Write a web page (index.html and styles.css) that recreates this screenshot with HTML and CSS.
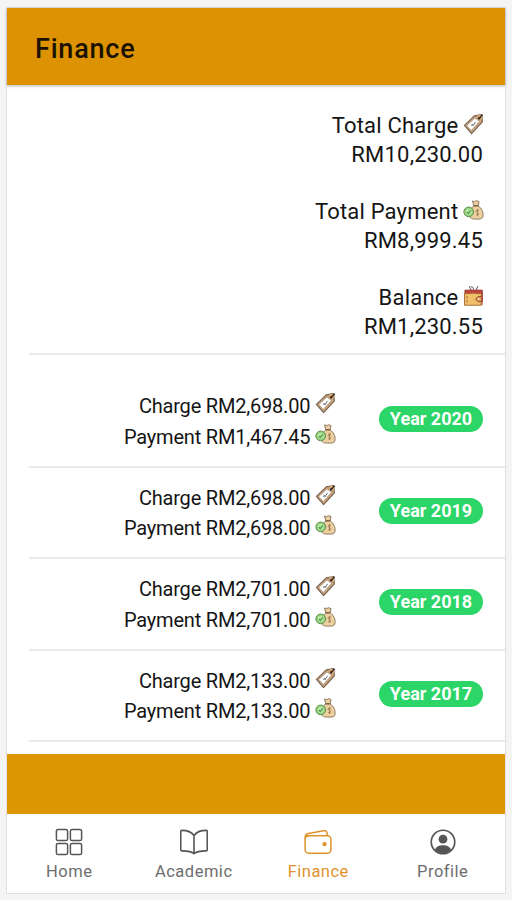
FILE: index.html
```html
<!DOCTYPE html>
<html lang="en">
<head>
  <meta charset="UTF-8" />
  <meta name="viewport" content="width=device-width, initial-scale=1.0"/>
  <title>Finance</title>
  <link rel="stylesheet" href="styles.css">
</head>
<body>

  <!-- shared icons -->
  <svg class="icon-defs" width="0" height="0">
    <symbol id="tag" viewBox="0 0 22 22">
      <path d="M1.5 12.5 11.8 2.5 19.6 1.2 20.3 8.7 9 21Z" fill="#c9a27c" stroke="#77624f" stroke-width="1.2" stroke-linejoin="round"/>
      <path d="M4 12.6 12.5 4.8 17.3 8.2 8.7 17.8Z" fill="#fff" stroke="#a4917f" stroke-width=".7"/>
      <path d="m8.3 12.5 2-1 .2 1.400 2.600-4.100" fill="none" stroke="#666" stroke-width="1"/>
      <path d="m14.500 2.100 5-.8.6 5.400Z" fill="#e0ad70"/>
      <path d="M16.600 5.400 20.500 1.200" stroke="#302820" stroke-width="1.500"/>
      <circle cx="16.800" cy="5.200" r="1.200" fill="#302820"/>
    </symbol>
    <symbol id="bag" viewBox="0 0 22 22">
      <path d="M10 1.500 12.300 2.300 14 1.200 16.800 2.200 15.900 6.600C19 9 22 13 20.800 18.200 20 21 17 20.500 13 20.500 8 20.500 6.600 19 7 15.500 7.200 11.500 9 9 11.300 6.600Z" fill="#ecd0a1" stroke="#8b7558" stroke-width="1"/>
      <path d="M11 6.600h5" stroke="#765b3c" stroke-width="1.500"/>
      <path d="M16.500 11.200c-3-.8-3.700 1.600-1.600 2.400 2.400.9 1.600 3-1.200 2.300M15.400 9.800v7.500" fill="none" stroke="#a27b50" stroke-width="1"/>
      <circle cx="6" cy="13" r="5.100" fill="#8fcf78" stroke="#5e8d50" stroke-width="1"/>
      <circle cx="6" cy="13" r="3.200" fill="#b9e6a2"/>
      <path d="m4 13.200 1.500 1.500 2.600-3.400" fill="none" stroke="#479347" stroke-width="1.200"/>
    </symbol>
    <symbol id="purse" viewBox="0 0 22 22">
      <path d="m6.500.8 2 4M10 1.200l1.200 3M15.800.6l-2.200 4M8.500 1l1 1" stroke="#766866" stroke-width="1.100"/>
      <path d="M2 4.800h18.200v6H2Z" fill="#c5413c" stroke="#863630" stroke-width=".8"/>
      <path d="M1.600 8.300c4 .8 8-.9 12 0 2.300.5 4 .3 5.500-.2v12.600H1.600Z" fill="#efbf69" stroke="#a56b37" stroke-width="1"/>
      <path d="M20.300 11.600h-4.600l-2.500 2.700 2.500 2.600h4.600Z" fill="#d99a55" stroke="#933e31" stroke-width="1"/>
      <circle cx="16.400" cy="14.200" r="1" fill="#fff0b0"/>
      <path d="M4.200 11.500v2M4.200 15.500v2M20 6v14.500" stroke="#a64334" stroke-width="1"/>
    </symbol>
  </svg>

  <div class="app">
    <header class="toolbar">
      <h1>Finance</h1>
    </header>

    <main class="content">
      <section class="summary">
        <div class="total">
          <div>Total Charge <svg class="emoji"><use href="#tag"/></svg></div>
          <div class="amount">RM10,230.00</div>
        </div>
        <div class="total">
          <div>Total Payment <svg class="emoji"><use href="#bag"/></svg></div>
          <div class="amount">RM8,999.45</div>
        </div>
        <div class="total">
          <div>Balance <svg class="emoji"><use href="#purse"/></svg></div>
          <div class="amount">RM1,230.55</div>
        </div>
      </section>

      <section class="years">
        <div class="year-row">
          <div class="details">
            <div>Charge RM2,698.00 <svg class="emoji"><use href="#tag"/></svg></div>
            <div>Payment RM1,467.45 <svg class="emoji"><use href="#bag"/></svg></div>
          </div>
          <span class="badge">Year 2020</span>
        </div>
        <div class="year-row">
          <div class="details">
            <div>Charge RM2,698.00 <svg class="emoji"><use href="#tag"/></svg></div>
            <div>Payment RM2,698.00 <svg class="emoji"><use href="#bag"/></svg></div>
          </div>
          <span class="badge">Year 2019</span>
        </div>
        <div class="year-row">
          <div class="details">
            <div>Charge RM2,701.00 <svg class="emoji"><use href="#tag"/></svg></div>
            <div>Payment RM2,701.00 <svg class="emoji"><use href="#bag"/></svg></div>
          </div>
          <span class="badge">Year 2018</span>
        </div>
        <div class="year-row">
          <div class="details">
            <div>Charge RM2,133.00 <svg class="emoji"><use href="#tag"/></svg></div>
            <div>Payment RM2,133.00 <svg class="emoji"><use href="#bag"/></svg></div>
          </div>
          <span class="badge">Year 2017</span>
        </div>
      </section>
    </main>

    <div class="footer-bar"></div>

    <nav class="tabs">
      <a class="tab">
        <svg viewBox="0 0 30 30" fill="none" stroke="currentColor" stroke-width="1.6">
          <rect x="1.5" y="1.5" width="12" height="12" rx="1.8"/>
          <rect x="16.5" y="1.5" width="12" height="12" rx="1.8"/>
          <rect x="1.5" y="16.5" width="12" height="12" rx="1.8"/>
          <rect x="16.5" y="16.5" width="12" height="12" rx="1.8"/>
        </svg>
        <span>Home</span>
      </a>
      <a class="tab">
        <svg viewBox="0 0 30 30" fill="none" stroke="currentColor" stroke-width="1.7" stroke-linejoin="round">
          <path d="M15 8C12.5 4.500 8 2.500 2 2.500A1.200 1.200 0 0 0 .8 3.700v19.600A1.200 1.200 0 0 0 2 24.500c6 0 10.500.5 13 3 2.500-2.500 7-3 13-3a1.200 1.200 0 0 0 1.200-1.200V3.700A1.200 1.200 0 0 0 28 2.500C22 2.500 17.500 4.500 15 8ZM15 8v19"/>
        </svg>
        <span>Academic</span>
      </a>
      <a class="tab active">
        <svg viewBox="0 0 30 30" fill="none" stroke="currentColor" stroke-width="1.6" stroke-linejoin="round">
          <rect x="1.2" y="8.2" width="27.600" height="18.800" rx="3.800"/>
          <path d="M1.300 12V9.500c0-2 1.200-3.100 3.300-3.600l16.200-3c2.500-.5 4 .8 4 2.900v2.400M2 9.500c1-1.200 2.500-1.300 4-1.300"/>
          <circle cx="22" cy="17.300" r="1.500" fill="currentColor"/>
        </svg>
        <span>Finance</span>
      </a>
      <a class="tab">
        <svg viewBox="0 0 30 30">
          <circle cx="15" cy="15" r="12.600" fill="none" stroke="currentColor" stroke-width="1.800"/>
          <circle cx="15" cy="12" r="4.700" fill="currentColor"/>
          <path d="M6.300 23.600c1.300-3.600 4.700-5 8.700-5s7.400 1.400 8.700 5c-2.300 2.400-5.300 3.800-8.700 3.800s-6.400-1.400-8.700-3.800Z" fill="currentColor"/>
        </svg>
        <span>Profile</span>
      </a>
    </nav>
  </div>

</body>
</html>
```
FILE: styles.css
```css
* {
  box-sizing: border-box;
}

body {
  margin: 0;
  padding: 7px 6px 6px;
  height: 900px;
  background: #f4f4f4;
  font-family: Roboto, "Liberation Sans", sans-serif;
  color: #151515;
}

.icon-defs {
  display: block;
}

.app {
  display: flex;
  flex-direction: column;
  height: 887px;
  background: #fff;
  border: 1px solid #e1e1e1;
}

.toolbar {
  height: 77px;
  flex: none;
  display: flex;
  align-items: center;
  padding: 4px 28px 0;
  background: #dc9202;
  box-shadow: 0 1px 3px rgba(0, 0, 0, 0.3);
}

.toolbar h1 {
  margin: 0;
  font-size: 27px;
  font-weight: 500;
  letter-spacing: 0.8px;
  color: #1b1203;
}

.content {
  flex: 1;
  padding-left: 22px;
}

.emoji {
  width: 21px;
  height: 22px;
}

.summary {
  display: flex;
  flex-direction: column;
  gap: 28px;
  height: 270px;
  padding: 26px 21px 0 0;
  border-bottom: 2px solid #e9eaeb;
  text-align: right;
  font-size: 22px;
  line-height: 29px;
  letter-spacing: 0.2px;
}

.total {
  height: 58px;
}

.amount {
  padding-right: 1px;
}

.summary .emoji {
  vertical-align: -2px;
  margin-left: -1px;
}

.years {
  padding-top: 21px;
}

.year-row {
  display: flex;
  justify-content: space-between;
  height: 91.5px;
  padding: 15px 22px 0 0;
  border-bottom: 2px solid #e9eaeb;
}

.details {
  width: 307px;
  text-align: right;
  font-size: 20px;
  line-height: 30.5px;
  letter-spacing: -0.2px;
}

.details > div {
  height: 30.5px;
}

.details .emoji {
  vertical-align: -1px;
}

.badge {
  width: 104px;
  height: 26px;
  margin-top: 15px;
  border-radius: 13px;
  background: #2bd568;
  color: #fff;
  font-size: 18px;
  font-weight: 700;
  line-height: 26px;
  text-align: center;
}

.footer-bar {
  height: 60px;
  flex: none;
  background: #dc9604;
}

.tabs {
  display: grid;
  grid-template-columns: repeat(4, 1fr);
  height: 79px;
  flex: none;
}

.tab {
  display: flex;
  flex-direction: column;
  align-items: center;
  padding-top: 14px;
  color: #6d6d6f;
  font-size: 16.5px;
  line-height: 20px;
  letter-spacing: 0.5px;
}

.tab svg {
  width: 28px;
  height: 28px;
  margin-bottom: 6px;
  color: #555557;
}

.tab.active,
.tab.active svg {
  color: #df922b;
}
```
